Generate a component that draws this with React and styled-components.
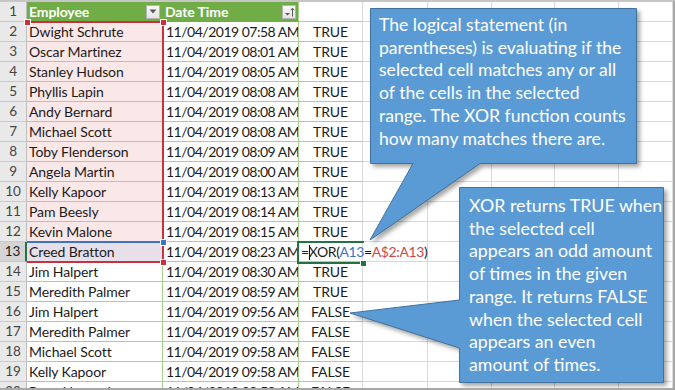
import styled, { createGlobalStyle } from "styled-components";

const GlobalStyle = createGlobalStyle`
  html, body { margin: 0; padding: 0; background: #fff; }
  body { font-family: Lato, "Liberation Sans", sans-serif; }
`;

const COLS = "27px 136px 136px 64px 65px 64px 63px 64px 1fr";
const TABLE_LINE = "#A9D08E";
const GRID_LINE = "#D9D9D9";

const Sheet = styled.div`
  position: relative;
  width: 675px;
  height: 390px;
  box-sizing: border-box;
  overflow: hidden;
  background: #fff;
  border-top: 2px solid #c6c6c6;
  border-right: 2px solid #a8a8a8;
  border-bottom: 2px solid #a8a8a8;
`;

const Row = styled.div`
  display: grid;
  grid-template-columns: ${COLS};
  height: 20px;
`;

const RowHead = styled.div`
  box-sizing: border-box;
  background: ${(p) => (p.$active ? "#d4d4d4" : "#e9e9e9")};
  color: ${(p) => (p.$active ? "#222" : "#444")};
  border-right: ${(p) => (p.$active ? "2px solid #217346" : "1px solid #bdbdbd")};
  border-bottom: 1px solid #cacaca;
  font-size: 13.5px;
  letter-spacing: -0.2px;
  line-height: 19px;
  text-align: center;
`;

const Cell = styled.div`
  box-sizing: border-box;
  background: ${(p) => p.$bg || "#fff"};
  color: ${(p) => p.$color || "#1b1b1b"};
  border-right: 1px solid ${(p) => p.$vline || GRID_LINE};
  border-bottom: 1px solid ${(p) => p.$hline || GRID_LINE};
  font-size: 14px;
  letter-spacing: -0.1px;
  line-height: 19px;
  text-align: ${(p) => p.$align || "left"};
  padding: 0 ${(p) => (p.$align === "right" ? "3px" : "2px")};
  white-space: nowrap;
  overflow: hidden;
`;

const DateCell = styled(Cell)`
  letter-spacing: -0.5px;
  padding-right: 3px;
`;

const FormulaCell = styled(Cell)`
  overflow: visible;
  position: relative;
  z-index: 1;
  letter-spacing: -0.4px;
`;

const HeadCell = styled(Cell)`
  display: flex;
  align-items: center;
  justify-content: space-between;
  padding: 0 2px 0 2px;
  color: #fff;
  font-weight: 700;
`;

const FilterBtn = styled.span`
  width: 14px;
  height: 14px;
  box-sizing: border-box;
  border: 1px solid #b4b4b4;
  background: linear-gradient(#fafafa, #e4e4e4);
  display: flex;
  align-items: center;
  justify-content: center;
  flex: none;
`;

const Ref = styled.span`
  color: ${(p) => p.$c};
`;

const Caret = styled.span`
  display: inline-block;
  width: 1px;
  height: 15px;
  background: #111;
  vertical-align: -3px;
  margin: 0 -1px 0 0;
`;

const Overlay = styled.div`
  position: absolute;
  left: 0;
  top: -2px;
  width: 675px;
  height: 390px;
  pointer-events: none;
  z-index: 2;
`;

const Frame = styled.div`
  position: absolute;
  left: ${(p) => p.$x}px;
  top: ${(p) => p.$y}px;
  width: ${(p) => p.$w}px;
  height: ${(p) => p.$h}px;
  box-sizing: border-box;
  border-style: solid;
  border-color: ${(p) => p.$c};
  border-width: ${(p) => p.$bw};
`;

const Handle = styled.div`
  position: absolute;
  left: ${(p) => p.$x - 2}px;
  top: ${(p) => p.$y - 2}px;
  width: 5px;
  height: 5px;
  background: ${(p) => p.$c};
  border: 1px solid #fff;
  box-sizing: content-box;
  margin: -1px 0 0 -1px;
`;

const Shapes = styled.svg`
  position: absolute;
  left: 0;
  top: 0;
  filter: drop-shadow(3px 3px 2px rgba(0, 0, 0, 0.35));
`;

const CalloutText = styled.div`
  position: absolute;
  left: ${(p) => p.$x}px;
  top: ${(p) => p.$y}px;
  color: #fff;
  font-size: ${(p) => p.$size}px;
  line-height: 22.7px;
  white-space: nowrap;
`;

const rows = [
  ["Dwight Schrute", "07:58", "TRUE"],
  ["Oscar Martinez", "08:01", "TRUE"],
  ["Stanley Hudson", "08:05", "TRUE"],
  ["Phyllis Lapin", "08:08", "TRUE"],
  ["Andy Bernard", "08:08", "TRUE"],
  ["Michael Scott", "08:08", "TRUE"],
  ["Toby Flenderson", "08:09", "TRUE"],
  ["Angela Martin", "08:00", "TRUE"],
  ["Kelly Kapoor", "08:13", "TRUE"],
  ["Pam Beesly", "08:14", "TRUE"],
  ["Kevin Malone", "08:15", "TRUE"],
  ["Creed Bratton", "08:23", null],
  ["Jim Halpert", "08:30", "TRUE"],
  ["Meredith Palmer", "08:59", "TRUE"],
  ["Jim Halpert", "09:56", "FALSE"],
  ["Meredith Palmer", "09:57", "FALSE"],
  ["Michael Scott", "09:58", "FALSE"],
  ["Kelly Kapoor", "09:58", "FALSE"],
  ["Ryan Howard", "09:59", "FALSE"],
];

function EmptyCells() {
  return [0, 1, 2, 3, 4].map((i) => <Cell key={i} />);
}

function DownArrow() {
  return (
    <svg width="8" height="5" viewBox="0 0 8 5">
      <path d="M0.5 0.5 H7.5 L4 4.5 Z" fill="#595959" />
    </svg>
  );
}

function SortIcon() {
  return (
    <svg width="11" height="10" viewBox="0 0 11 10">
      <path d="M1 6 H6 L3.5 8.5 Z" fill="#595959" />
      <path d="M8.5 9.5 V1.5 M6.8 3.2 L8.5 1.2 L10.2 3.2" stroke="#595959" strokeWidth="1" fill="none" />
    </svg>
  );
}

export default function App() {
  return (
    <>
      <GlobalStyle />
      <Sheet>
        <Row>
          <RowHead>1</RowHead>
          <HeadCell $bg="#70AD47" $vline="#70AD47" $hline="#70AD47">
            Employee
            <FilterBtn>
              <DownArrow />
            </FilterBtn>
          </HeadCell>
          <HeadCell $bg="#70AD47" $vline={TABLE_LINE} $hline="#70AD47">
            Date Time
            <FilterBtn>
              <SortIcon />
            </FilterBtn>
          </HeadCell>
          <Cell $hline={TABLE_LINE} />
          <EmptyCells />
        </Row>
        {rows.map(([name, time, result], i) => {
          const n = i + 2;
          const inRange = n <= 13;
          const active = n === 13;
          return (
            <Row key={n}>
              <RowHead $active={active}>{n}</RowHead>
              <Cell
                $bg={active ? "#E7E0EA" : inRange ? "#FAE7E7" : "#fff"}
                $vline={TABLE_LINE}
                $hline={TABLE_LINE}
              >
                {name}
              </Cell>
              <DateCell $align="right" $vline={TABLE_LINE} $hline={TABLE_LINE}>
                11/04/2019 {time} AM
              </DateCell>
              {result ? (
                <Cell $align="center" $hline={TABLE_LINE}>
                  {result}
                </Cell>
              ) : (
                <FormulaCell $hline={TABLE_LINE}>
                  =<Caret />XOR(<Ref $c="#3B74C9">A13</Ref>=<Ref $c="#D2464B">A$2:A13</Ref>)
                </FormulaCell>
              )}
              <EmptyCells />
            </Row>
          );
        })}

        <Overlay>
          <Frame $x={27} $y={241} $w={136} $h={21} $c="#3B74C9" $bw="2px 0 0 0" />
          <Frame $x={27} $y={21} $w={137} $h={242} $c="#C8323C" $bw="2px 2px 2px 0" />
          <Handle $x={27} $y={22} $c="#C8323C" />
          <Handle $x={163} $y={22} $c="#C8323C" />
          <Handle $x={163} $y={242} $c="#3B74C9" />
          <Handle $x={163} $y={262} $c="#C8323C" />
          <Frame $x={297} $y={241} $w={67} $h={23} $c="#217346" $bw="2px 0 2px 2px" />
          <Handle $x={363} $y={263} $c="#217346" />

          <Shapes width="675" height="390" viewBox="0 0 675 390">
            <path
              d="M370.5 8.5 H636.5 V163.5 H480 L370 240 L413 163.5 H370.5 Z"
              fill="#5B9BD5"
              stroke="#41719C"
              strokeWidth="1"
            />
            <path
              d="M459.5 187.5 H663.5 V382.5 H459.5 V348 L350 313 L459.5 300 Z"
              fill="#5B9BD5"
              stroke="#41719C"
              strokeWidth="1"
            />
          </Shapes>

          <CalloutText $x={379} $y={14} $size={17.6}>
            The logical statement (in
            <br />
            parentheses) is evaluating if the
            <br />
            selected cell matches any or all
            <br />
            of the cells in the selected
            <br />
            range. The XOR function counts
            <br />
            how many matches there are.
          </CalloutText>

          <CalloutText $x={469} $y={194} $size={17.8}>
            XOR returns TRUE when
            <br />
            the selected cell
            <br />
            appears an odd amount
            <br />
            of times in the given
            <br />
            range. It returns FALSE
            <br />
            when the selected cell
            <br />
            appears an even
            <br />
            amount of times.
          </CalloutText>
        </Overlay>
      </Sheet>
    </>
  );
}
